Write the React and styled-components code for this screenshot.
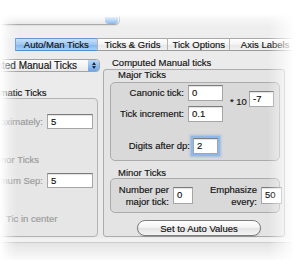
import React from 'react';
import styled, { createGlobalStyle } from 'styled-components';

const Global = createGlobalStyle`
  html, body { margin: 0; padding: 0; background: #fff; }
  body { font-family: "Liberation Sans", Arial, sans-serif; }
`;

const Page = styled.div`
  position: relative;
  width: 300px;
  height: 276px;
  overflow: hidden;
  background: #fff;
  font-family: "Liberation Sans", Arial, sans-serif;
  font-size: 9.5px;
  color: #111;
  -webkit-text-stroke: 0.15px currentColor;
`;

const Window = styled.div`
  margin-left: -30px;
  margin-top: 14px;
  width: 330px;
  display: flex;
  flex-direction: column;
  background: #ebebeb;
`;

const TopArea = styled.div`
  height: 24px;
  background: #eeeeee;
  display: flex;
  flex-direction: column;
`;

const PopupStub = styled.div`
  margin-top: 2px;
  width: 150px;
  height: 9px;
  box-sizing: border-box;
  background: linear-gradient(#f4f4f4, #e2e2e2);
  border-bottom: 1px solid #9a9a9a;
  border-right: 1px solid #aaa;
  border-radius: 0 0 5px 0;
  display: flex;
  justify-content: flex-end;
  padding-right: 1px;
  box-shadow: 0 1px 1px rgba(0, 0, 0, 0.08);
`;

const StubStepper = styled.div`
  width: 13px;
  height: 7px;
  margin-top: 1px;
  border-radius: 0 0 4px 4px;
  background: linear-gradient(#a9cdf4, #6aa3e6);
`;

const TabBar = styled.div`
  height: 13px;
  display: flex;
  padding-left: 45px;
`;

const Tab = styled.div`
  width: ${(p) => p.$w}px;
  box-sizing: border-box;
  height: 13px;
  display: flex;
  align-items: center;
  justify-content: center;
  white-space: nowrap;
  font-size: 9.5px;
  color: #111;
  border-top: 1px solid ${(p) => (p.$active ? '#6b97d0' : '#a9a9a9')};
  border-bottom: 1px solid ${(p) => (p.$active ? '#5a88c6' : '#9a9a9a')};
  border-left: 1px solid ${(p) => (p.$active ? '#6b97d0' : '#b4b4b4')};
  background: ${(p) =>
    p.$active
      ? 'linear-gradient(#c7e0fa 0%, #9fc8f3 50%, #7fb4ee 51%, #a6d0f8 100%)'
      : 'linear-gradient(#ffffff 0%, #f3f3f3 50%, #e6e6e6 51%, #f1f1f1 100%)'};
`;

const Content = styled.div`
  display: flex;
  height: 187px;
`;

const LeftCol = styled.div`
  width: 130px;
  display: flex;
  flex-direction: column;
`;

const Popup = styled.div`
  margin-top: 8px;
  height: 13px;
  width: 130px;
  box-sizing: border-box;
  display: flex;
  align-items: center;
  justify-content: flex-end;
  gap: 11px;
  background: linear-gradient(#fdfdfd, #e9e9e9);
  border: 1px solid #a3a3a3;
  border-radius: 0 4px 4px 0;
  white-space: nowrap;
  font-size: 10px;
  color: #111;
`;

const Stepper = styled.div`
  width: 11px;
  height: 11px;
  border-radius: 0 3px 3px 0;
  background: linear-gradient(#b9d8f8, #6da6e8);
  display: flex;
  flex-direction: column;
  align-items: center;
  justify-content: center;
  gap: 1px;
  flex-shrink: 0;
`;

const Arrow = styled.div`
  width: 0;
  height: 0;
  border-left: 2px solid transparent;
  border-right: 2px solid transparent;
  ${(p) =>
    p.$up ? 'border-bottom: 3px solid #1b2a44;' : 'border-top: 3px solid #1b2a44;'}
`;

const GroupTitle = styled.div`
  margin-top: ${(p) => p.$mt}px;
  margin-left: ${(p) => p.$ml}px;
  height: 10px;
  line-height: 10px;
  white-space: nowrap;
  color: ${(p) => (p.$dim ? '#9a9a9a' : '#111')};
`;

const LeftBox = styled.div`
  margin: 0 2px 0 6px;
  height: 139px;
  box-sizing: border-box;
  border: 1px solid #b3b3b3;
  border-radius: 4px;
  background: #e6e6e6;
  display: flex;
  flex-direction: column;
  padding-top: 15px;
`;

const FieldRow = styled.div`
  display: flex;
  justify-content: flex-end;
  align-items: center;
  gap: ${(p) => p.$gap ?? 4}px;
  margin-top: ${(p) => p.$mt ?? 0}px;
  padding-right: ${(p) => p.$pr ?? 0}px;
  white-space: nowrap;
`;

const Label = styled.span`
  color: ${(p) => (p.$dim ? '#9a9a9a' : '#111')};
  text-align: right;
  line-height: 12px;
  ${(p) => (p.$w ? `width: ${p.$w}px;` : '')}
`;

const Field = styled.div`
  width: ${(p) => p.$w}px;
  height: ${(p) => p.$h}px;
  box-sizing: border-box;
  background: #fff;
  border: 1px solid #a6a6a6;
  border-top-color: #7c7c7c;
  box-shadow: inset 0 1px 1px rgba(0, 0, 0, 0.12)
    ${(p) => (p.$focus ? ', 0 0 0 2px #8fb8ea, 0 0 2px 3px rgba(110,160,225,0.5)' : '')};
  padding: 1px 3px;
  line-height: 11px;
  font-size: 9.5px;
  color: #111;
  flex-shrink: 0;
`;

const CheckRow = styled.div`
  margin-top: 25px;
  margin-left: 16px;
  display: flex;
  align-items: center;
  gap: 4px;
  height: 10px;
  white-space: nowrap;
  color: #9a9a9a;
`;

const CheckBox = styled.div`
  width: 9px;
  height: 9px;
  box-sizing: border-box;
  border: 1px solid #b0b0b0;
  border-radius: 2px;
  background: #f4f4f4;
`;

const RightCol = styled.div`
  margin-left: 3px;
  display: flex;
  flex-direction: column;
`;

const RightBox = styled.div`
  margin-top: 1px;
  width: 182px;
  height: 168px;
  box-sizing: border-box;
  border: 1px solid #acacac;
  border-radius: 3px;
  background: #e4e4e4;
  padding-left: 6px;
  display: flex;
  flex-direction: column;
`;

const InnerBox = styled.div`
  margin-top: ${(p) => p.$mt}px;
  width: 170px;
  height: ${(p) => p.$h}px;
  box-sizing: border-box;
  border: 1px solid #ababab;
  border-radius: 5px;
  background: #d9d9d9;
  display: flex;
  align-items: ${(p) => (p.$center ? 'center' : 'flex-start')};
`;

const FieldsCol = styled.div`
  width: 112px;
  padding-top: 2px;
  display: flex;
  flex-direction: column;
`;

const ExpBlock = styled.div`
  margin-left: 7px;
  padding-top: 8px;
  display: flex;
  align-items: flex-end;
  gap: 2px;
`;

const Times = styled.span`
  width: 17px;
  line-height: 10px;
  white-space: nowrap;
`;

const Pair = styled.div`
  display: flex;
  align-items: center;
  gap: 4px;
`;

const Button = styled.div`
  margin-top: 7px;
  margin-left: 27px;
  width: 124px;
  height: 16px;
  box-sizing: border-box;
  border: 1px solid #7d7d7d;
  border-radius: 8px;
  background: linear-gradient(#ffffff 0%, #f2f2f2 50%, #e4e4e4 51%, #f4f4f4 100%);
  display: flex;
  align-items: center;
  justify-content: center;
  white-space: nowrap;
  color: #111;
  box-shadow: 0 1px 1px rgba(0, 0, 0, 0.15);
`;

const BottomBar = styled.div`
  height: 22px;
  display: flex;
  flex-direction: column;
`;

const BottomLight = styled.div`
  height: 4px;
  background: #f0f0f0;
`;

const BottomLine = styled.div`
  height: 1px;
  background: #c4c4c4;
`;

const BottomGray = styled.div`
  flex: 1;
  background: linear-gradient(#dedede, #e9e9e9);
`;

const Fade = styled.div`
  position: absolute;
  inset: 0;
  pointer-events: none;
  background:
    linear-gradient(to right, #fff 0px, rgba(255, 255, 255, 0.75) 4px, rgba(255, 255, 255, 0.35) 9px, rgba(255, 255, 255, 0) 18px),
    linear-gradient(to left, #fff 6px, rgba(255, 255, 255, 0.55) 17px, rgba(255, 255, 255, 0) 32px),
    linear-gradient(to top, #fff 12px, rgba(255, 255, 255, 0.5) 22px, rgba(255, 255, 255, 0) 38px),
    linear-gradient(to bottom, #fff 14px, rgba(255, 255, 255, 0.5) 19px, rgba(255, 255, 255, 0) 27px);
`;

export default function App() {
  return (
    <Page>
      <Global />
      <Window>
        <TopArea>
          <PopupStub>
            <StubStepper />
          </PopupStub>
        </TopArea>
        <TabBar>
          <Tab $w={83} $active>Auto/Man Ticks</Tab>
          <Tab $w={72}>Ticks &amp; Grids</Tab>
          <Tab $w={63}>Tick Options</Tab>
          <Tab $w={72}>Axis Labels</Tab>
        </TabBar>
        <Content>
          <LeftCol>
            <Popup>
              <span>Computed Manual Ticks</span>
              <Stepper>
                <Arrow $up />
                <Arrow />
              </Stepper>
            </Popup>
            <GroupTitle $mt={16} $ml={10}>Automatic Ticks</GroupTitle>
            <LeftBox>
              <FieldRow $pr={4}>
                <Label $dim>Approximately:</Label>
                <Field $w={46} $h={15}>5</Field>
              </FieldRow>
              <GroupTitle $mt={26} $ml={14} $dim>Minor Ticks</GroupTitle>
              <FieldRow $pr={4} $mt={8}>
                <Label $dim>Minimum Sep:</Label>
                <Field $w={46} $h={15}>5</Field>
              </FieldRow>
              <CheckRow>
                <CheckBox />
                <span>Tic in center</span>
              </CheckRow>
            </LeftBox>
          </LeftCol>
          <RightCol>
            <GroupTitle $mt={7} $ml={9}>Computed Manual ticks</GroupTitle>
            <RightBox>
              <GroupTitle $mt={0} $ml={8}>Major Ticks</GroupTitle>
              <InnerBox $mt={2} $h={79}>
                <FieldsCol>
                  <FieldRow>
                    <Label>Canonic tick:</Label>
                    <Field $w={35} $h={16}>0</Field>
                  </FieldRow>
                  <FieldRow $mt={5}>
                    <Label>Tick increment:</Label>
                    <Field $w={35} $h={16}>0.1</Field>
                  </FieldRow>
                  <FieldRow $mt={16} $pr={5} $gap={3}>
                    <Label>Digits after dp:</Label>
                    <Field $w={25} $h={16} $focus>2</Field>
                  </FieldRow>
                </FieldsCol>
                <ExpBlock>
                  <Times>* 10</Times>
                  <Field $w={25} $h={16}>-7</Field>
                </ExpBlock>
              </InnerBox>
              <GroupTitle $mt={7} $ml={8}>Minor Ticks</GroupTitle>
              <InnerBox $mt={0} $h={35} $center>
                <Pair>
                  <Label $w={58}>Number per<br />major tick:</Label>
                  <Field $w={20} $h={17}>0</Field>
                </Pair>
                <Pair>
                  <Label $w={64}>Emphasize<br />every:</Label>
                  <Field $w={21} $h={17}>50</Field>
                </Pair>
              </InnerBox>
              <Button>Set to Auto Values</Button>
            </RightBox>
          </RightCol>
        </Content>
        <BottomBar>
          <BottomLight />
          <BottomLine />
          <BottomGray />
        </BottomBar>
      </Window>
      <Fade />
    </Page>
  );
}
